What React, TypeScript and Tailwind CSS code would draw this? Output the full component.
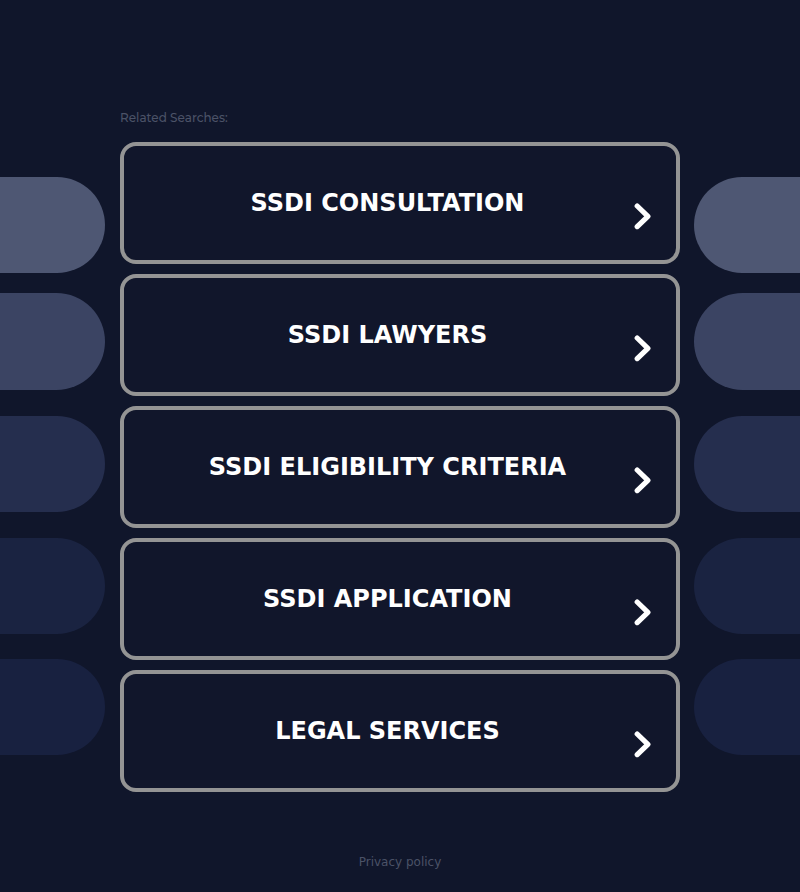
const searches = [
  'SSDI CONSULTATION',
  'SSDI LAWYERS',
  'SSDI ELIGIBILITY CRITERIA',
  'SSDI APPLICATION',
  'LEGAL SERVICES',
];

const pills = [
  'h-[96px] bg-[#4e5773]',
  'mt-[20px] h-[97px] bg-[#3b4463]',
  'mt-[26px] h-[96px] bg-[#252e4e]',
  'mt-[26px] h-[96px] bg-[#1a2341]',
  'mt-[25px] h-[96px] bg-[#182140]',
];

function Pills({ side }: { side: 'left' | 'right' }) {
  return (
    <div className={`w-[120px] shrink-0 pt-[177px] ${side === 'left' ? 'pr-[15px]' : 'pl-[14px]'}`}>
      {pills.map((pill) => (
        <div key={pill} className={`${pill} ${side === 'left' ? 'rounded-r-full' : 'rounded-l-full'}`} />
      ))}
    </div>
  );
}

function Chevron() {
  return (
    <svg width="18" height="28" viewBox="0 0 18 28" fill="none" stroke="#fff" strokeWidth="5.2" strokeLinecap="round" strokeLinejoin="round">
      <path d="M3.2 4 13.9 14.3 3.2 24.6" />
    </svg>
  );
}

export default function App() {
  return (
    <div className="flex h-[892px] w-[800px] overflow-hidden bg-[#10162b] font-['DejaVu_Sans',sans-serif]">
      <Pills side="left" />
      <main className="flex w-[560px] shrink-0 flex-col pt-[108px]">
        <div className="h-[34px] whitespace-nowrap font-['Montserrat','Inter',sans-serif] text-[12px] leading-[20px] font-medium text-[#4b5267]">
          Related Searches:
        </div>
        <ul className="flex flex-col gap-[10px]">
          {searches.map((text) => (
            <li key={text}>
              <a className="flex h-[122px] rounded-[16px] border-4 border-[#949494] bg-[#11162b] pr-[24px] pl-[17px]">
                <span className="mt-[41px] h-[32px] flex-1 text-center text-[24px] leading-[32px] font-bold whitespace-nowrap text-white">
                  {text}
                </span>
                <span className="mt-[56px] h-[28px] w-[18px]">
                  <Chevron />
                </span>
              </a>
            </li>
          ))}
        </ul>
        <footer className="mt-[60px] text-center text-[12px] leading-[20px] text-[#4b5267]">Privacy policy</footer>
      </main>
      <Pills side="right" />
    </div>
  );
}
